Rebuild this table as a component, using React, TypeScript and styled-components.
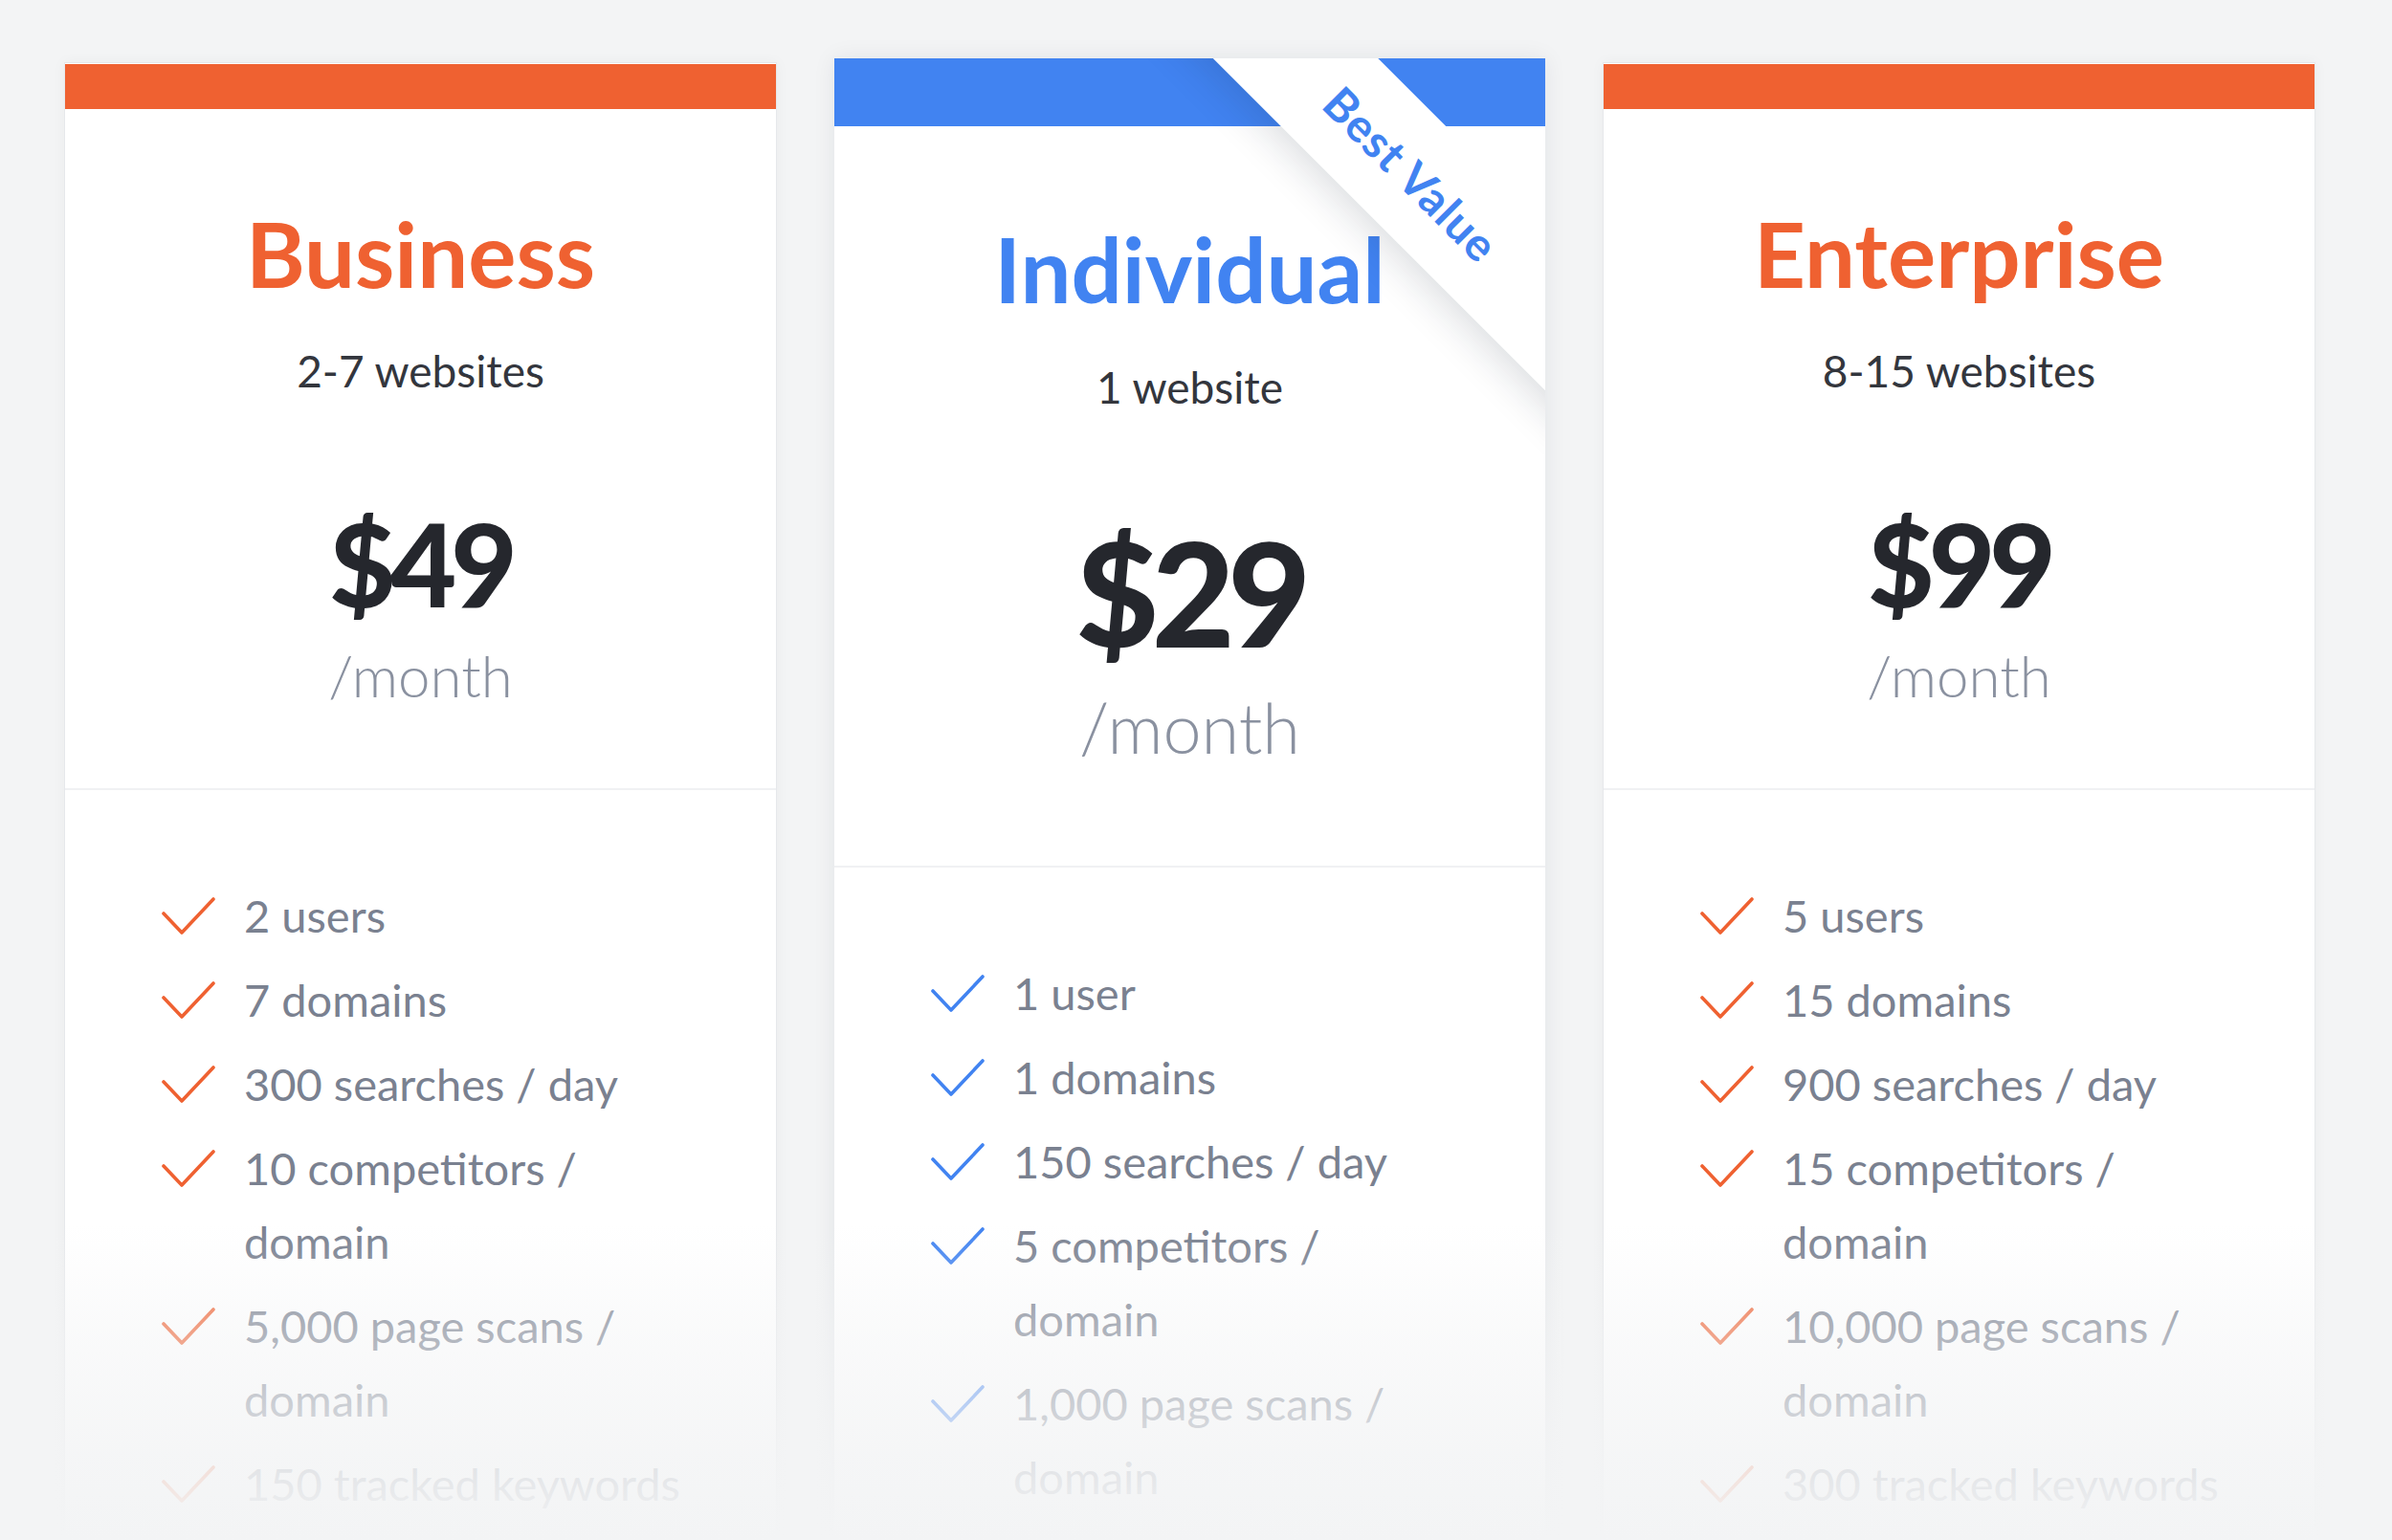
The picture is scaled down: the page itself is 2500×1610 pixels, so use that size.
import React from "react";
import styled, { createGlobalStyle, css } from "styled-components";

const ORANGE = "#ef6131";
const BLUE = "#4183f1";
const PAGE_BG = "#f3f4f5";

type Plan = {
  name: string;
  sites: string;
  price: string;
  featured?: boolean;
  features: string[];
};

const plans: Plan[] = [
  {
    name: "Business",
    sites: "2-7 websites",
    price: "$49",
    features: [
      "2 users",
      "7 domains",
      "300 searches / day",
      "10 competitors / domain",
      "5,000 page scans / domain",
      "150 tracked keywords",
    ],
  },
  {
    name: "Individual",
    sites: "1 website",
    price: "$29",
    featured: true,
    features: [
      "1 user",
      "1 domains",
      "150 searches / day",
      "5 competitors / domain",
      "1,000 page scans / domain",
    ],
  },
  {
    name: "Enterprise",
    sites: "8-15 websites",
    price: "$99",
    features: [
      "5 users",
      "15 domains",
      "900 searches / day",
      "15 competitors / domain",
      "10,000 page scans / domain",
      "300 tracked keywords",
    ],
  },
];

export default function App() {
  return (
    <>
      <GlobalStyle />
      <Page>
        {plans.map((plan) => (
          <Card key={plan.name} $featured={plan.featured}>
            <TopBar $featured={plan.featured} />
            {plan.featured && (
              <Ribbon>
                <RibbonText>Best Value</RibbonText>
              </Ribbon>
            )}
            <Header $featured={plan.featured}>
              <Title $featured={plan.featured}>{plan.name}</Title>
              <Sites $featured={plan.featured}>{plan.sites}</Sites>
              <Price $featured={plan.featured}>{plan.price}</Price>
              <Per $featured={plan.featured}>/month</Per>
            </Header>
            <Features>
              {plan.features.map((f) => (
                <Feature key={f}>
                  <CheckBox>
                    <Check color={plan.featured ? BLUE : ORANGE} />
                  </CheckBox>
                  <FeatureText>{f}</FeatureText>
                </Feature>
              ))}
            </Features>
          </Card>
        ))}
        <Fade />
      </Page>
    </>
  );
}

function Check({ color }: { color: string }) {
  return (
    <svg width="56" height="40" viewBox="0 0 56 40" fill="none">
      <path
        d="M2 17 L21 37 L54 2"
        stroke={color}
        strokeWidth="3.6"
        strokeLinecap="round"
        strokeLinejoin="round"
      />
    </svg>
  );
}

const GlobalStyle = createGlobalStyle`
  html, body {
    margin: 0;
    padding: 0;
    background: ${PAGE_BG};
  }
  * { box-sizing: border-box; }
`;

const Page = styled.div`
  position: relative;
  height: 1610px;
  overflow: hidden;
  display: flex;
  align-items: stretch;
  gap: 60px;
  padding: 61px 0 0 67px;
  background: ${PAGE_BG};
  font-family: Lato, "Noto Sans", sans-serif;
`;

const Card = styled.div<{ $featured?: boolean }>`
  position: relative;
  flex: none;
  width: ${(p) => (p.$featured ? 743 : 745)}px;
  background: #fff;
  overflow: hidden;
  ${(p) =>
    p.$featured
      ? css`
          margin-top: 0;
          box-shadow: 0 0 22px rgba(30, 40, 60, 0.08);
        `
      : css`
          margin-top: 4px;
          border: 1px solid #e6e8eb;
          border-bottom: none;
          box-shadow: 0 0 14px rgba(30, 40, 60, 0.04);
        `}
`;

const TopBar = styled.div<{ $featured?: boolean }>`
  height: ${(p) => (p.$featured ? 71 : 47)}px;
  background: ${(p) => (p.$featured ? BLUE : ORANGE)};
  ${(p) => !p.$featured && "margin-top: 1px;"}
`;

const Ribbon = styled.div`
  position: absolute;
  left: 253px;
  top: 60px;
  width: 700px;
  height: 122px;
  background: #fff;
  transform: rotate(45deg);
  display: flex;
  align-items: center;
  justify-content: center;
  box-shadow: 0 30px 44px -22px rgba(20, 30, 50, 0.16);
  z-index: 2;
`;

const RibbonText = styled.span`
  font-family: Lato, sans-serif;
  font-weight: 700;
  font-size: 48px;
  letter-spacing: 1px;
  color: ${BLUE};
  line-height: 1;
`;

const Header = styled.div<{ $featured?: boolean }>`
  position: relative;
  z-index: 1;
  display: flex;
  flex-direction: column;
  align-items: center;
  padding-top: ${(p) => (p.$featured ? 102 : 104)}px;
  padding-bottom: ${(p) => (p.$featured ? 109 : 88)}px;
  border-bottom: 2px solid #f0f1f3;
`;

const Title = styled.h2<{ $featured?: boolean }>`
  margin: 0;
  font-size: 94px;
  line-height: 1;
  font-weight: 700;
  letter-spacing: 0;
  color: ${(p) => (p.$featured ? BLUE : ORANGE)};
`;

const Sites = styled.div<{ $featured?: boolean }>`
  margin-top: ${(p) => (p.$featured ? 54 : 53)}px;
  font-size: 46px;
  line-height: 1;
  color: #33363d;
`;

const Price = styled.div<{ $featured?: boolean }>`
  margin-top: ${(p) => (p.$featured ? 116 : 118)}px;
  font-size: ${(p) => (p.$featured ? 150 : 120)}px;
  line-height: 1;
  font-weight: 900;
  letter-spacing: -0.05em;
  color: #25272d;
`;

const Per = styled.div<{ $featured?: boolean }>`
  margin-top: ${(p) => (p.$featured ? 30 : 27)}px;
  font-size: ${(p) => (p.$featured ? 72 : 60)}px;
  line-height: 1;
  font-weight: 300;
  color: #8a91a0;
`;

const Features = styled.ul`
  list-style: none;
  margin: 0;
  padding: 93px 0 0 101px;
  display: flex;
  flex-direction: column;
  gap: 11px;
`;

const Feature = styled.li`
  display: flex;
  align-items: flex-start;
  gap: 30px;
`;

const CheckBox = styled.div`
  flex: none;
  width: 56px;
  height: 77px;
  display: flex;
  align-items: center;
`;

const FeatureText = styled.span`
  max-width: 468px;
  font-size: 47px;
  line-height: 77px;
  color: #7a8190;
`;

const Fade = styled.div`
  position: absolute;
  left: 0;
  right: 0;
  bottom: 0;
  height: 330px;
  pointer-events: none;
  z-index: 5;
  background: linear-gradient(
    to bottom,
    rgba(243, 244, 245, 0) 0%,
    rgba(243, 244, 245, 0.45) 35%,
    rgba(243, 244, 245, 0.85) 75%,
    rgba(243, 244, 245, 1) 100%
  );
`;
